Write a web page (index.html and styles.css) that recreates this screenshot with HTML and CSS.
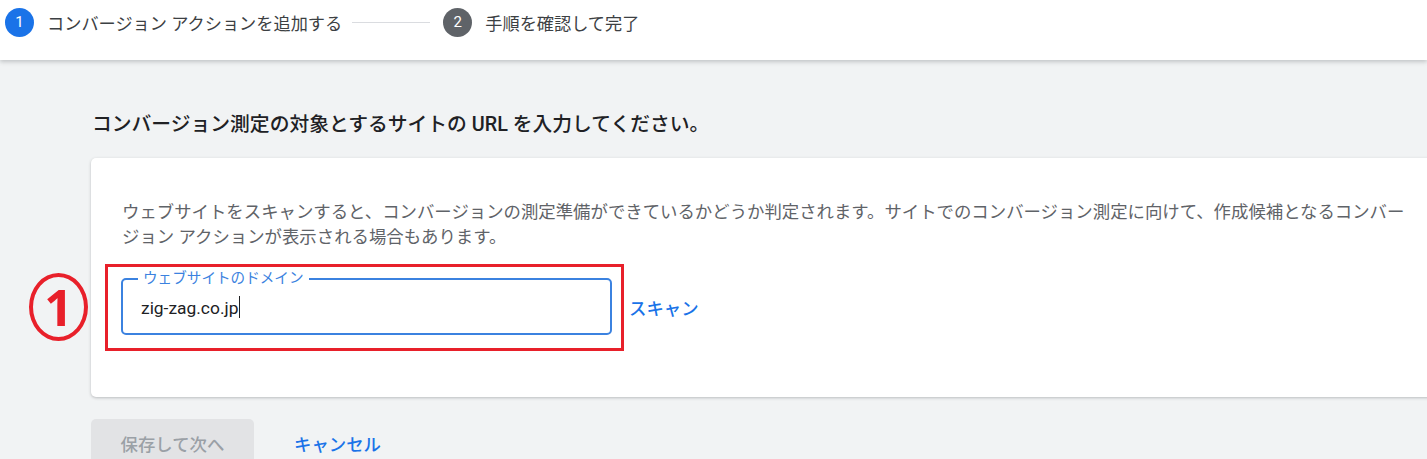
FILE: index.html
```html
<!DOCTYPE html>
<html lang="ja">
<head>
<meta charset="utf-8">
<title>コンバージョン アクションを追加する</title>
<link rel="stylesheet" href="styles.css">
</head>
<body>
<header class="topbar">
  <div class="stepper">
    <span class="step-num active">1</span>
    <span class="step-label">コンバージョン アクションを追加する</span>
    <span class="step-line"></span>
    <span class="step-num">2</span>
    <span class="step-label">手順を確認して完了</span>
  </div>
</header>
<main class="main">
  <h1 class="title">コンバージョン測定の対象とするサイトの URL を入力してください。</h1>
  <div class="card-wrap">
    <span class="annot">1</span>
    <section class="card">
      <p class="desc">ウェブサイトをスキャンすると、コンバージョンの測定準備ができているかどうか判定されます。サイトでのコンバージョン測定に向けて、作成候補となるコンバージョン アクションが表示される場合もあります。</p>
      <div class="field-row">
        <div class="highlight">
          <div class="field">
            <span class="field-label">ウェブサイトのドメイン</span>
            <span class="field-value">zig-zag.co.jp</span><span class="caret"></span>
          </div>
        </div>
        <span class="scan">スキャン</span>
      </div>
    </section>
  </div>
  <div class="actions">
    <span class="btn-save">保存して次へ</span>
    <span class="btn-cancel">キャンセル</span>
  </div>
</main>
</body>
</html>
```

FILE: styles.css
```css
html, body {
  margin: 0;
  padding: 0;
}
body {
  background: #f1f3f4;
  font-family: "Roboto", "Noto Sans CJK JP", sans-serif;
  color: #202124;
  overflow: hidden;
  width: 1427px;
  height: 459px;
}
.topbar {
  height: 60px;
  background: #ffffff;
  box-shadow: 0 2px 4px rgba(60, 64, 67, 0.25);
  position: relative;
  z-index: 1;
}
.stepper {
  display: flex;
  align-items: center;
  height: 44px;
  padding-left: 5px;
}
.step-num {
  width: 29px;
  height: 29px;
  border-radius: 50%;
  background: #5f6368;
  color: #ffffff;
  font-size: 15px;
  display: flex;
  align-items: center;
  justify-content: center;
  flex: none;
}
.step-num.active {
  background: #1a73e8;
}
.step-label {
  font-size: 17.2px;
  color: #3c4043;
  margin-left: 13px;
}
.step-line {
  width: 78px;
  height: 1px;
  background: #dadce0;
  margin: 0 13px 0 10px;
}
.main {
  padding: 0 0 0 91px;
}
.title {
  margin: 0;
  padding: 49px 0 0 1px;
  font-size: 19.8px;
  font-weight: 500;
  line-height: 32px;
  color: #202124;
}
.card-wrap {
  position: relative;
  margin-top: 17px;
}
.annot {
  position: absolute;
  left: -62px;
  top: 115px;
  width: 51px;
  height: 60px;
  border: 4px solid #e8202a;
  border-radius: 50%;
  color: #e8202a;
  font-family: "Noto Sans", sans-serif;
  font-weight: 700;
  font-size: 50px;
  line-height: 60px;
  text-align: center;
}
.card {
  background: #ffffff;
  border-radius: 5px 0 0 5px;
  box-shadow: 0 1px 3px rgba(60, 64, 67, 0.3);
  margin-right: -20px;
  padding: 42px 0 46px 14px;
}
.desc {
  margin: 0 0 14px 17px;
  width: 1290px;
  font-size: 17.4px;
  line-height: 25px;
  color: #5f6368;
}
.field-row {
  display: flex;
  align-items: center;
}
.highlight {
  border: 3px solid #e8202a;
  padding: 11px 9px 13px 13px;
}
.field {
  position: relative;
  width: 469px;
  height: 53px;
  border: 2px solid #3b82e0;
  border-radius: 5px;
  display: flex;
  align-items: center;
  padding-left: 18px;
}
.field-label {
  position: absolute;
  left: 15px;
  top: -11px;
  background: #ffffff;
  padding: 0 5px;
  font-size: 14.6px;
  line-height: 18px;
  color: #3b82e0;
}
.field-value {
  font-size: 17.4px;
  color: #202124;
  padding-top: 2px;
}
.caret {
  width: 1px;
  height: 22px;
  background: #202124;
  margin-left: 1px;
}
.scan {
  margin-left: 5px;
  font-size: 17.4px;
  font-weight: 500;
  color: #1a73e8;
}
.actions {
  display: flex;
  align-items: center;
  margin-top: 22px;
}
.btn-save {
  width: 163px;
  height: 48px;
  display: flex;
  align-items: center;
  justify-content: center;
  background: #e2e3e5;
  border-radius: 5px;
  color: #9aa0a6;
  font-size: 17.4px;
  font-weight: 500;
}
.btn-cancel {
  margin-left: 40px;
  font-size: 17.4px;
  font-weight: 500;
  color: #1a73e8;
}
```
